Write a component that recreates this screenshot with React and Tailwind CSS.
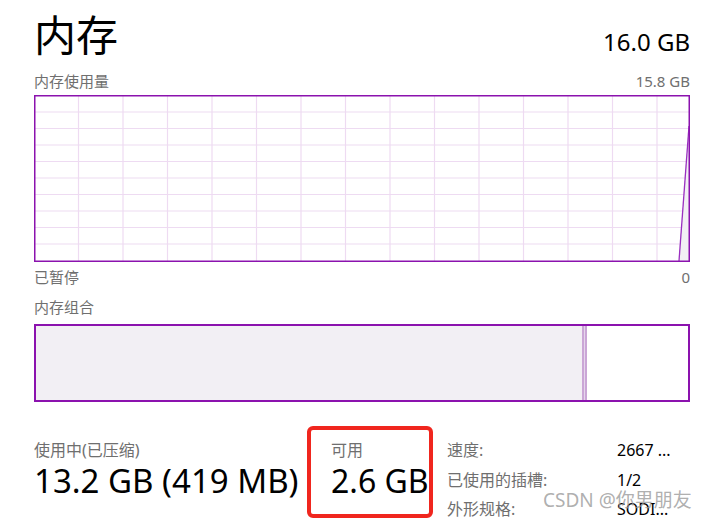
import React from "react";

const font = { fontFamily: "'Noto Sans', 'Noto Sans CJK SC', sans-serif" };

function UsageChart() {
  const w = 656;
  const h = 167;
  const rows = [];
  for (let i = 1; i < 10; i++) rows.push(i * 16.5);
  const cols = [];
  for (let x = 44.5; x < w - 2; x += 44.5) cols.push(x);
  return (
    <svg width={w} height={h} viewBox={`0 0 ${w} ${h}`} className="block">
      <rect x="0" y="0" width={w} height={h} fill="#ffffff" />
      {rows.map((y) => (
        <line key={"r" + y} x1="1" x2={w - 1} y1={y + 0.5} y2={y + 0.5} stroke="#eedbf2" strokeWidth="1.2" />
      ))}
      {cols.map((x) => (
        <line key={"c" + x} x1={x} x2={x} y1="1" y2={h - 1} stroke="#eedbf2" strokeWidth="1.2" />
      ))}
      <polygon points={`645,${h - 1} 655,31 655,${h - 1}`} fill="#f2eff4" />
      <line x1="645" y1={h - 1} x2="655" y2="31" stroke="#9a2fc0" strokeWidth="1.3" />
      <rect x="0.75" y="0.75" width={w - 1.5} height={h - 1.5} fill="none" stroke="#8b12ae" strokeWidth="1.5" />
    </svg>
  );
}

export default function App() {
  return (
    <div className="relative w-[709px] h-[519px] overflow-hidden bg-white" style={font}>
      <div className="ml-[34px] w-[656px] pt-[9px]">
        <div className="flex items-baseline justify-between">
          <span className="text-[42px] leading-[52px] text-black">内存</span>
          <span className="text-[24px] leading-[30px] text-black">16.0 GB</span>
        </div>
        <div className="mt-[10px] flex justify-between text-[15px] leading-[20px] text-[#6f6f6f]">
          <span>内存使用量</span>
          <span>15.8 GB</span>
        </div>
        <div className="mt-[4px]">
          <UsageChart />
        </div>
        <div className="mt-[5px] flex justify-between text-[15px] leading-[20px] text-[#6f6f6f]">
          <span>已暂停</span>
          <span>0</span>
        </div>
        <div className="mt-[10px] text-[15px] leading-[20px] text-[#6f6f6f]">内存组合</div>
        <div className="mt-[7px] h-[78px] border-2 border-[#8b12ae] flex">
          <div className="w-[546px] bg-[#f2eff4]" />
          <div className="w-[5px] flex">
            <div className="w-[2px] bg-[#caa6d6]" />
            <div className="w-[1px] bg-[#e6d6ec]" />
            <div className="w-[2px] bg-[#caa6d6]" />
          </div>
          <div className="flex-1 bg-white" />
        </div>
      </div>

      <div className="ml-[34px] mt-[24px] flex">
        <div className="w-[273px] pt-[14px]">
          <div className="text-[16px] leading-[20px] text-[#6f6f6f]">使用中(已压缩)</div>
          <div className="mt-[1px] text-[33px] leading-[40px] text-black whitespace-nowrap">13.2 GB (419 MB)</div>
        </div>
        <div className="w-[126px] h-[92px] border-4 border-[#f0261e] rounded-[6px] pl-[20px] pt-[10px]">
          <div className="text-[16px] leading-[20px] text-[#6f6f6f]">可用</div>
          <div className="mt-[1px] text-[32px] leading-[40px] text-black whitespace-nowrap">2.6 GB</div>
        </div>
        <div className="ml-[14px] pt-[10px] grid grid-cols-[170px_80px] text-[16px] leading-[29.5px]">
          <span className="text-[#6f6f6f]">速度:</span>
          <span className="text-black">2667 ...</span>
          <span className="text-[#6f6f6f]">已使用的插槽:</span>
          <span className="text-black">1/2</span>
          <span className="text-[#6f6f6f]">外形规格:</span>
          <span className="text-black">SODI...</span>
        </div>
      </div>

      <div className="absolute left-[543px] top-[488px] text-[19px] leading-[24px] text-[#9a9a9a]/80 whitespace-nowrap">
        CSDN @你男朋友
      </div>
    </div>
  );
}
